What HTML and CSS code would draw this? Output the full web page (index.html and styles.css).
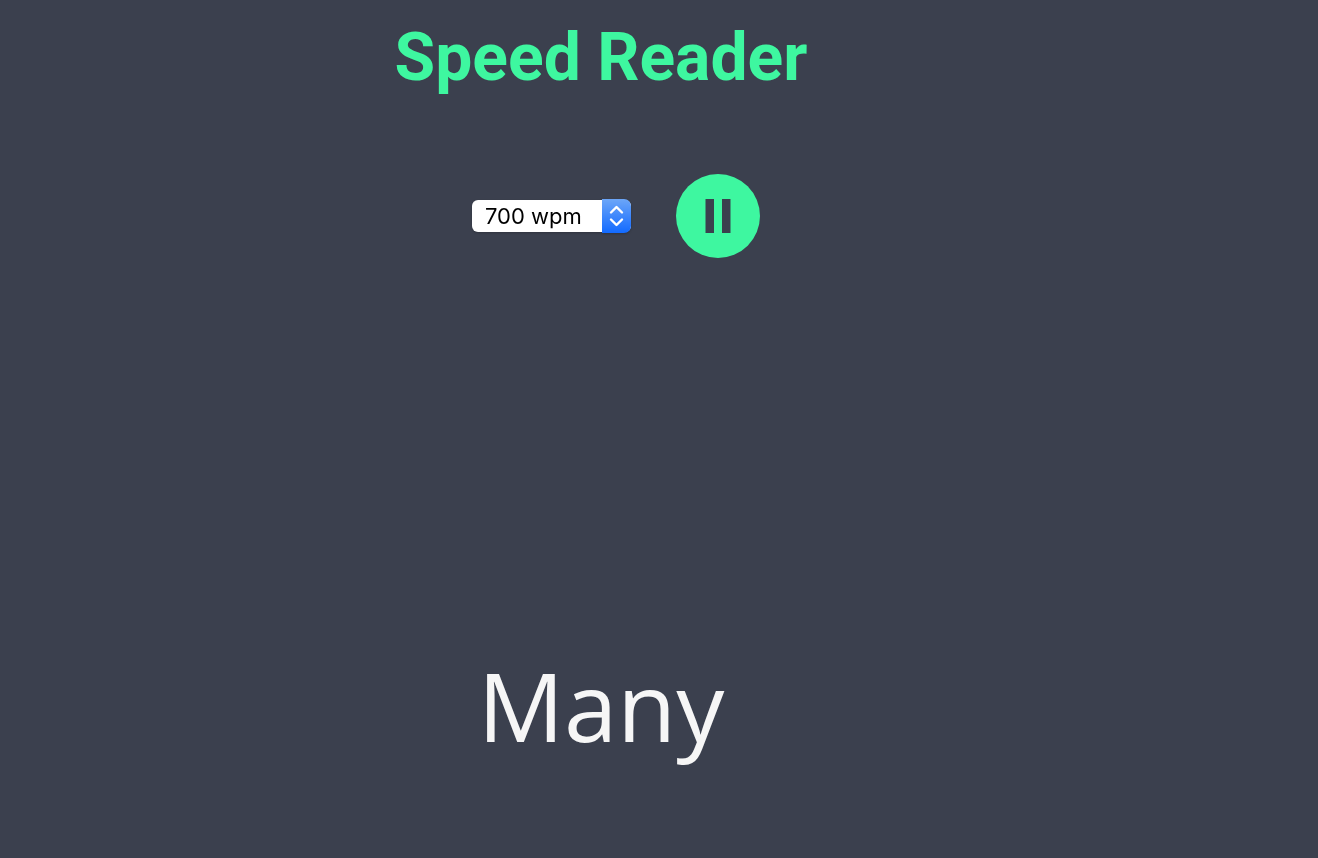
FILE: index.html
```html
<!DOCTYPE html>
<html lang="en">
<head>
<meta charset="utf-8">
<meta name="viewport" content="width=device-width, initial-scale=1">
<title>Speed Reader</title>
<link rel="stylesheet" href="styles.css">
</head>
<body>
<main class="reader">
  <h1 class="title">Speed Reader</h1>
  <div class="controls">
    <div class="speed">
      <select class="speed-select" aria-label="Reading speed">
        <option>300 wpm</option>
        <option>500 wpm</option>
        <option selected>700 wpm</option>
      </select>
      <svg class="speed-arrows" viewBox="0 0 29 34" aria-hidden="true">
        <path d="M9 13.500l5.500-5.500 5.500 5.500M9 20.500l5.500 5.500 5.500-5.500"/>
      </svg>
    </div>
    <button class="pause" type="button" aria-label="Pause">
      <svg class="pause-icon" viewBox="0 0 84 84" aria-hidden="true">
        <path d="M29.500 25h8.500v34h-8.500zM46 25h8.500v34H46z"/>
      </svg>
    </button>
  </div>
  <p class="word">Many</p>
</main>
</body>
</html>
```
FILE: styles.css
```css
* {
  box-sizing: border-box;
}

body {
  margin: 0;
  background: #3b404e;
}

.reader {
  min-height: 100vh;
  padding: 16px 116px 87px 0;
  display: flex;
  flex-direction: column;
  align-items: center;
}

.title {
  margin: 0;
  color: #3ef7a0;
  font: 700 66px/84px Roboto, sans-serif;
}

.controls {
  margin-top: 74px;
  padding-left: 30px;
  display: flex;
  align-items: center;
  gap: 45px;
}

.speed {
  display: grid;
  align-items: center;
  filter: drop-shadow(0 1px 1px rgba(0, 0, 0, 0.2));
}

.speed-select {
  grid-area: 1 / 1;
  appearance: none;
  width: 159px;
  height: 32px;
  padding: 0 30px 0 13px;
  border: 0;
  border-radius: 6px;
  background: #fff;
  color: #000;
  font: 400 22px/32px Inter, sans-serif;
}

.speed-arrows {
  grid-area: 1 / 1;
  justify-self: end;
  width: 29px;
  height: 34px;
  border-radius: 0 7px 7px 0;
  background: linear-gradient(#6ca6f8, #126aff);
  fill: none;
  stroke: #fff;
  stroke-width: 2.4;
  stroke-linecap: round;
  stroke-linejoin: round;
  pointer-events: none;
}

.pause {
  width: 84px;
  height: 84px;
  padding: 0;
  border: 0;
  border-radius: 50%;
  background: #3ef7a0;
}

.pause-icon {
  display: block;
  fill: #3b404e;
}

.word {
  margin: auto 0 0;
  color: #f6f6f6;
  font: 400 96px/132px "Open Sans", sans-serif;
}
```
